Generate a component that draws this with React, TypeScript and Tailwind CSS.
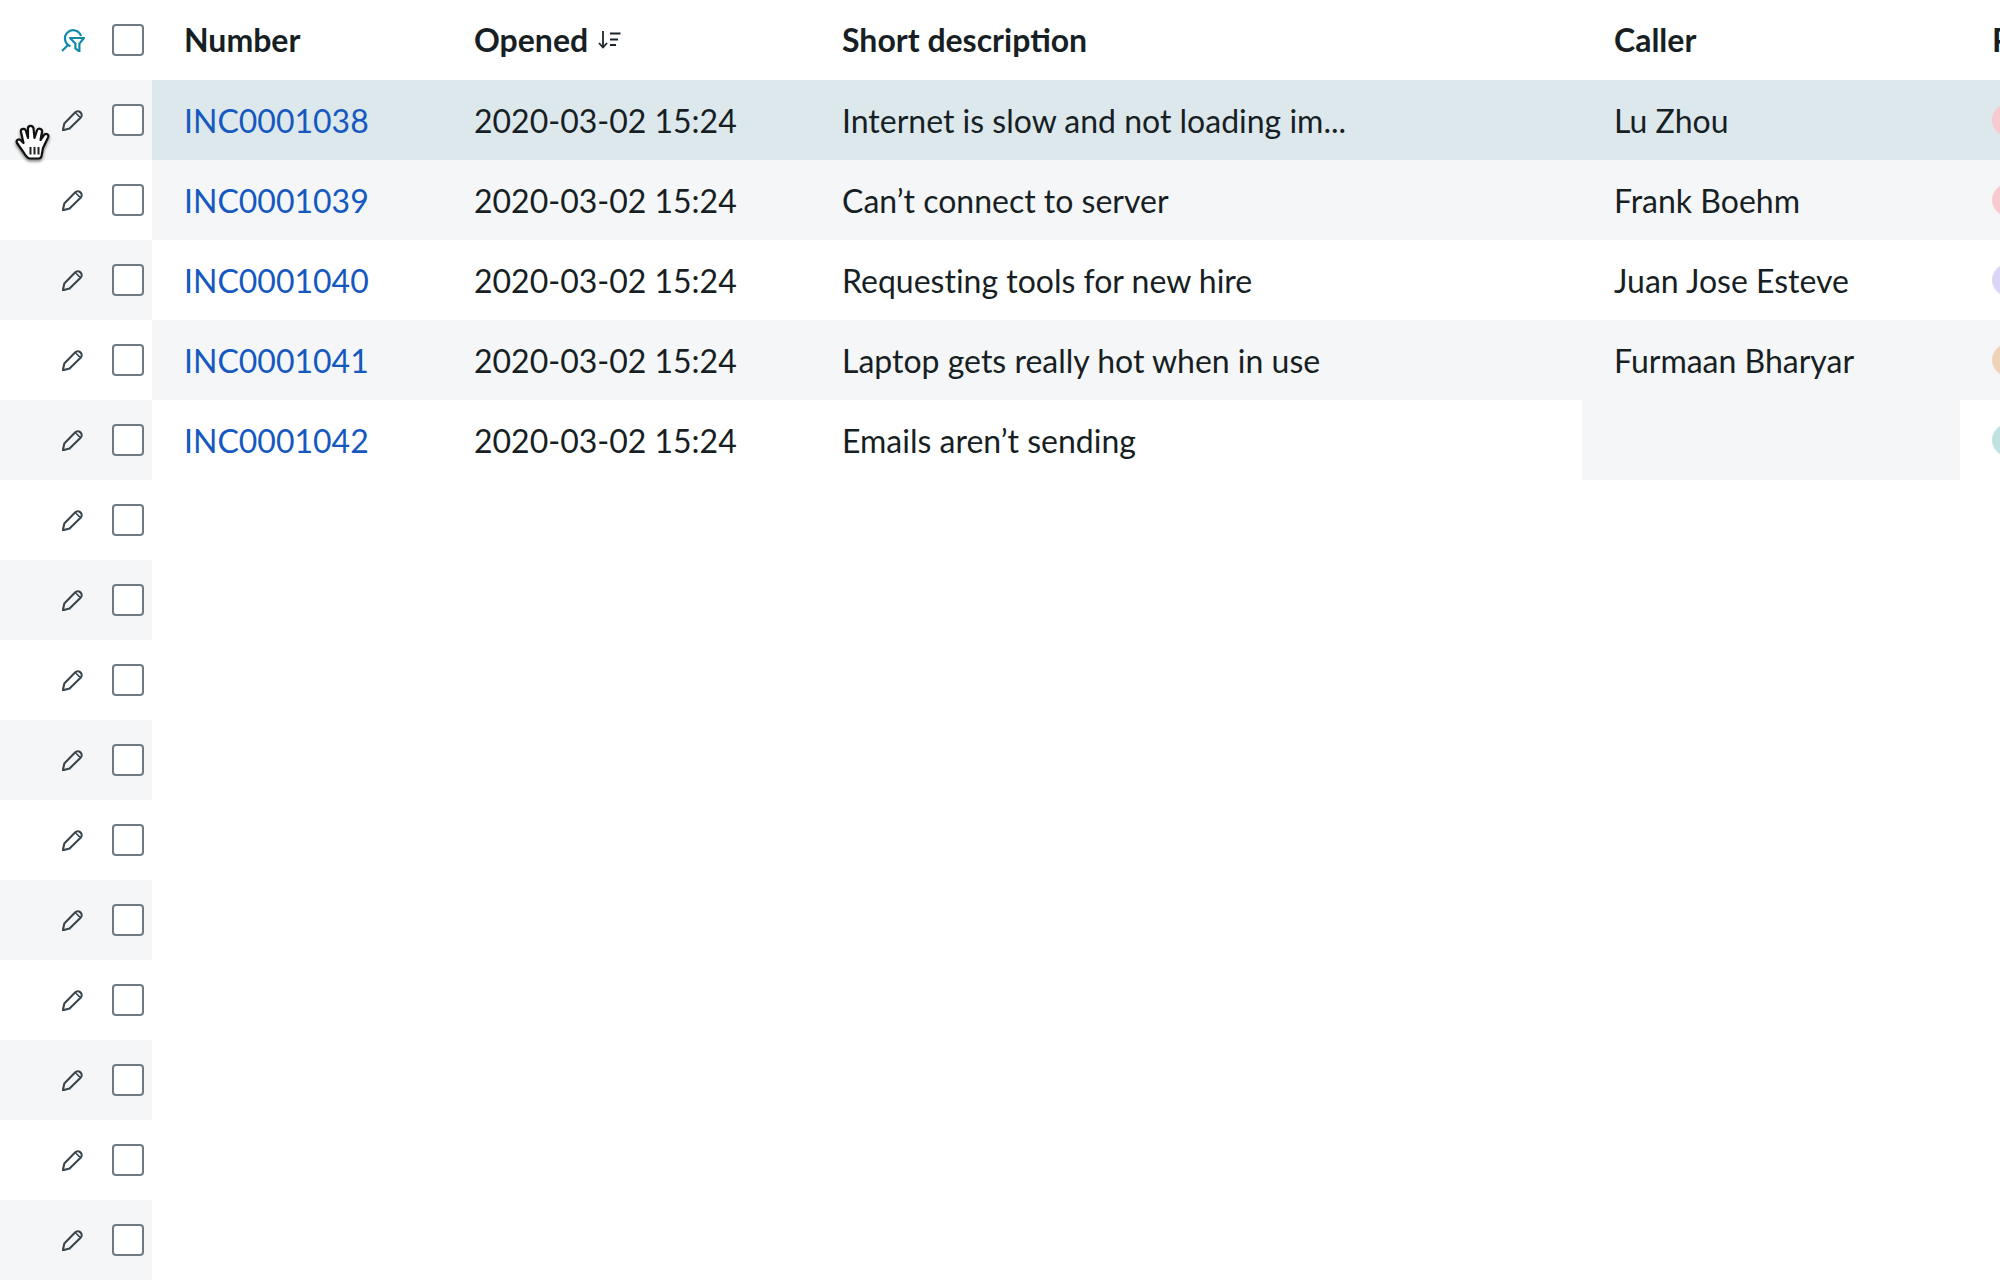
const rows = [
  { n: "INC0001038", d: "Internet is slow and not loading im...", c: "Lu Zhou", dot: "bg-[#f8c9cf]", bg: "bg-[#dce8ec]" },
  { n: "INC0001039", d: "Can’t connect to server", c: "Frank Boehm", dot: "bg-[#f8c9cf]", bg: "bg-[#f4f6f7]" },
  { n: "INC0001040", d: "Requesting tools for new hire", c: "Juan Jose Esteve", dot: "bg-[#ddd5f8]", bg: "bg-white" },
  { n: "INC0001041", d: "Laptop gets really hot when in use", c: "Furmaan Bharyar", dot: "bg-[#f0d2b8]", bg: "bg-[#f4f6f7]" },
  { n: "INC0001042", d: "Emails aren’t sending", c: "", dot: "bg-[#bfe3e3]", bg: "bg-white" },
];

function Pencil() {
  return (
    <svg width="21" height="21" viewBox="0 0 20 20" fill="none" stroke="#39454c" strokeWidth="2" strokeLinejoin="round" className="shrink-0 -mr-[1px]">
      <path d="M0.8 19.3 L2.2 12.8 L12.4 2.4 A3.5 3.5 0 0 1 17.7 7.4 L7.2 17.6 Z" />
      <path d="M13 2.8 L17 6.8" strokeWidth="1.4" />
    </svg>
  );
}

function Check() {
  return <div className="w-8 h-8 shrink-0 rounded-[4px] border-2 border-[#6f7b82] bg-white" />;
}

function FilterIcon() {
  return (
    <svg width="24" height="24" viewBox="0 0 24 24" fill="none" stroke="#0e8aa8" strokeWidth="2.2" className="shrink-0">
      <path d="M9.5 18.2 A8.2 8.2 0 1 1 20 8" />
      <path d="M1 23 L6.5 17.5" />
      <path d="M9 10 H23 L18.4 15.6 V23.5 L14.4 20.4 V15.6 Z" strokeLinejoin="round" />
    </svg>
  );
}

function SortIcon() {
  return (
    <svg width="23" height="20" viewBox="0 0 23 20" fill="none" stroke="#1a252b" strokeWidth="1.8" className="shrink-0">
      <path d="M5 1 V17" />
      <path d="M1 13 L5 17.5 L9 13" />
      <path d="M12 3.5 H22.5 M12 9.5 H20 M12 15 H18" />
    </svg>
  );
}

function HandCursor() {
  return (
    <svg width="38" height="38" viewBox="0 0 38 38" className="absolute left-[14px] top-[123px]" style={{ filter: "drop-shadow(0 2px 1.5px rgba(0,0,0,0.5))" }}>
      <path
        d="M10 30 L3 20 C1.5 17 5 15 7 17.5 L9.5 20 L7 9 C6.3 5.5 11 4.5 12 8 L14 15 L14 5.5 C14 2 19 2 19.5 5.5 L20.5 15 L23 7.5 C24 4.5 28.5 5.5 28 9 L26.5 17 L30 12 C32 9.5 35.5 11.5 34 14.5 L29 25 L27.5 33 C27 35 26 35.5 24.5 35.5 L16 35.5 C13.5 35.5 12 33 10 30 Z"
        fill="#fff"
        stroke="#111"
        strokeWidth="2.2"
        strokeLinejoin="round"
      />
      <path d="M16.5 24 V31.5 M20.5 24 V31.5 M24.5 24 V31.5" stroke="#222" strokeWidth="2" fill="none" />
    </svg>
  );
}

function Gutter({ tinted, header }: { tinted?: boolean; header?: boolean }) {
  return (
    <div className={`w-[152px] h-20 shrink-0 flex items-center ${header ? "pl-[61px] gap-[27px]" : "pl-[62px] gap-[30px]"} ${tinted ? "bg-[#f4f6f7]" : "bg-white"}`}>
      {header ? <FilterIcon /> : <Pencil />}
      <Check />
    </div>
  );
}

export default function App() {
  return (
    <div className="relative w-[2000px] h-[1280px] overflow-hidden bg-white text-[#171f24] text-[32px] leading-[40px]" style={{ fontFamily: "Lato, sans-serif" }}>
      <div className="flex h-20 items-center font-bold whitespace-nowrap">
        <Gutter header />
        <div className="w-[290px] shrink-0 pl-[32px]">Number</div>
        <div className="w-[368px] shrink-0 pl-[32px] flex items-center gap-[10px]">Opened <SortIcon /></div>
        <div className="w-[772px] shrink-0 pl-[32px]">Short description</div>
        <div className="w-[378px] shrink-0 pl-[32px]">Caller</div>
        <div className="pl-[32px]">Priority</div>
      </div>
      {Array.from({ length: 15 }).map((_, i) => {
        const r = rows[i];
        return (
          <div key={i} className="flex h-20 whitespace-nowrap">
            <Gutter tinted={i % 2 === 0} />
            {r && (
              <div className={`flex items-center grow h-20 ${r.bg}`}>
                <div className="w-[290px] shrink-0 pl-[32px] pt-[2px] text-[#1558c0]">{r.n}</div>
                <div className="w-[368px] shrink-0 pl-[32px] pt-[2px]">2020-03-02 15:24</div>
                <div className="w-[772px] shrink-0 pl-[32px] pt-[2px] [font-variant-ligatures:none]">{r.d}</div>
                <div className={`w-[378px] h-20 shrink-0 flex items-center pl-[32px] pt-[2px] ${r.c ? "" : "bg-[#f4f6f7]"}`}>{r.c}</div>
                <div className="flex items-center pl-[32px]">
                  <div className={`w-8 h-8 shrink-0 rounded-full ${r.dot}`} />
                </div>
              </div>
            )}
          </div>
        );
      })}
      <HandCursor />
    </div>
  );
}
